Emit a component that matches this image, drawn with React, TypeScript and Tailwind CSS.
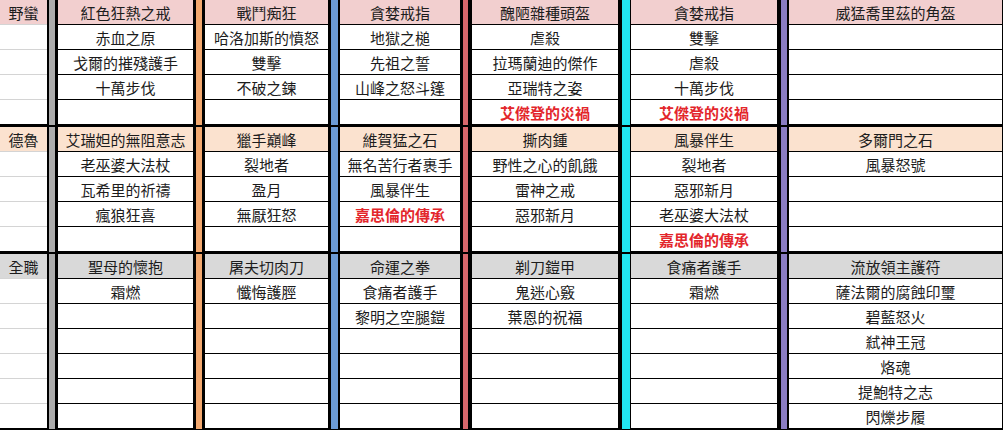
type Cell = { t: string; red?: boolean };

interface Section {
  label: string;
  headBg: string;
  rows: number;
  cols: Cell[][];
}

const c = (t: string, red = false): Cell => ({ t, red });

const sections: Section[] = [
  {
    label: "野蠻",
    headBg: "bg-[#f2cfcf]",
    rows: 5,
    cols: [
      [c("紅色狂熱之戒"), c("赤血之原"), c("戈爾的摧殘護手"), c("十萬步伐")],
      [c("戰鬥痴狂"), c("哈洛加斯的憤怒"), c("雙擊"), c("不破之鍊")],
      [c("貪婪戒指"), c("地獄之槌"), c("先祖之誓"), c("山峰之怒斗篷")],
      [c("醜陋雜種頭盔"), c("虐殺"), c("拉瑪蘭迪的傑作"), c("亞瑞特之姿"), c("艾傑登的災禍", true)],
      [c("貪婪戒指"), c("雙擊"), c("虐殺"), c("十萬步伐"), c("艾傑登的災禍", true)],
      [c("威猛喬里茲的角盔")],
    ],
  },
  {
    label: "德魯",
    headBg: "bg-[#fbe2cf]",
    rows: 5,
    cols: [
      [c("艾瑞妲的無阻意志"), c("老巫婆大法杖"), c("瓦希里的祈禱"), c("瘋狼狂喜")],
      [c("獵手巔峰"), c("裂地者"), c("盈月"), c("無厭狂怒")],
      [c("維賀猛之石"), c("無名苦行者裹手"), c("風暴伴生"), c("嘉思倫的傳承", true)],
      [c("撕肉鍾"), c("野性之心的飢餓"), c("雷神之戒"), c("惡邪新月")],
      [c("風暴伴生"), c("裂地者"), c("惡邪新月"), c("老巫婆大法杖"), c("嘉思倫的傳承", true)],
      [c("多爾門之石"), c("風暴怒號")],
    ],
  },
  {
    label: "全職",
    headBg: "bg-[#d9d9d9]",
    rows: 7,
    cols: [
      [c("聖母的懷抱"), c("霜燃")],
      [c("屠夫切肉刀"), c("懺悔護脛")],
      [c("命運之拳"), c("食痛者護手"), c("黎明之空腿鎧")],
      [c("剃刀鎧甲"), c("鬼迷心竅"), c("葉恩的祝福")],
      [c("食痛者護手"), c("霜燃")],
      [
        c("流放領主護符"),
        c("薩法爾的腐蝕印璽"),
        c("碧藍怒火"),
        c("弒神王冠"),
        c("烙魂"),
        c("提鮑特之志"),
        c("閃爍步履"),
      ],
    ],
  },
];

// stripe before each content column
const stripes = [
  "w-[11px] border-l-2 border-r-[3px] bg-[#acacac]",
  "w-[12px] border-x-[3px] bg-[#f2a86f]",
  "w-[12px] border-l-[3px] border-r-2 bg-[#6b9bd6]",
  "w-[12px] border-l-[3px] border-r-[4px] bg-[#d8676b]",
  "w-[13px] border-l-[4px] border-r-[1px] bg-[#22e6f2]",
  "w-[12px] border-l-[4px] border-r-2 bg-[#8a7cc2]",
];

const widths = ["w-[135px]", "w-[123px]", "w-[120px]", "w-[146px]", "w-[146px]", "w-[214px] border-r border-black"];

function Column({ cells, rows, headBg, width }: { cells: Cell[]; rows: number; headBg: string; width: string }) {
  return (
    <div className={`flex flex-col ${width}`}>
      {Array.from({ length: rows }).map((_, i) => {
        const cell = cells[i];
        return (
          <div
            key={i}
            className={`h-[25px] border-b border-black flex items-center justify-center whitespace-nowrap text-[15px] leading-none ${
              i === 0 ? headBg : "bg-white"
            } ${cell?.red ? "text-[#e3262b] font-bold" : "text-[#1c1c1c]"}`}
          >
            {cell?.t ?? ""}
          </div>
        );
      })}
    </div>
  );
}

export default function App() {
  return (
    <div
      className="w-[1003px] h-[430px] overflow-hidden bg-white"
      style={{ fontFamily: '"Noto Sans CJK TC", "Noto Sans", sans-serif' }}
    >
      {sections.map((s) => (
        <div key={s.label} className="flex border-b-2 border-black">
          <div className="flex flex-col w-[47px]">
            {Array.from({ length: s.rows }).map((_, i) => (
              <div
                key={i}
                className={`h-[25px] flex items-center justify-center text-[15px] leading-none text-[#1c1c1c] ${
                  i === s.rows - 1 ? "border-b border-black" : "border-b border-[#d4d4d4]"
                } ${i === 0 ? s.headBg : "bg-white"}`}
              >
                {i === 0 ? s.label : ""}
              </div>
            ))}
          </div>
          {s.cols.map((cells, ci) => (
            <div key={ci} className="flex">
              <div className={`${stripes[ci]} border-black`} />
              <Column cells={cells} rows={s.rows} headBg={s.headBg} width={widths[ci]} />
            </div>
          ))}
        </div>
      ))}
    </div>
  );
}
